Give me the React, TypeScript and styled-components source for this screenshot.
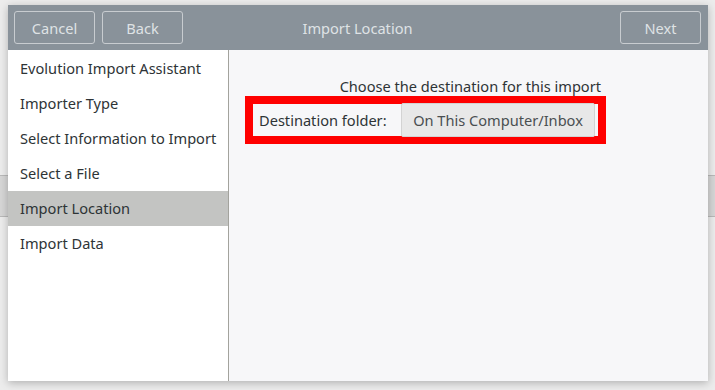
import React from "react";
import styled, { createGlobalStyle } from "styled-components";

const Global = createGlobalStyle`
  html, body { margin: 0; padding: 0; }
  body {
    width: 715px; height: 390px; overflow: hidden;
    font-family: "Noto Sans", "Open Sans", sans-serif;
    background:
      linear-gradient(to bottom, transparent 175px, #b9b9b9 175px, #b9b9b9 176px, #d6d6d6 176px, #d6d6d6 216px, #b9b9b9 216px, #b9b9b9 217px, transparent 217px),
      #ececec;
  }
`;

const Stage = styled.div`
  padding: 5px 7px 9px 8px;
`;

const Dialog = styled.div`
  width: 700px;
  height: 376px;
  display: flex;
  flex-direction: column;
  box-shadow: 0 2px 8px rgba(0, 0, 0, 0.25);
  background: #f7f7f9;
`;

const Header = styled.div`
  height: 45px;
  background: #89929a;
  display: grid;
  grid-template-columns: 1fr auto 1fr;
  align-items: center;
  padding: 0 7px 0 6px;
  flex-shrink: 0;
`;

const ButtonGroup = styled.div<{ $end?: boolean }>`
  display: flex;
  gap: 7px;
  justify-content: ${(p) => (p.$end ? "flex-end" : "flex-start")};
`;

const HeaderButton = styled.button`
  width: 81px;
  height: 33px;
  border: 1px solid #c8ccd0;
  border-radius: 3px;
  background: transparent;
  color: #dfe2e5;
  font-family: inherit;
  font-size: 14.6px;
  padding: 0;
`;

const Title = styled.div`
  text-align: center;
  color: #dfe2e5;
  font-size: 14.6px;
`;

const Body = styled.div`
  flex: 1;
  display: flex;
  min-height: 0;
`;

const Sidebar = styled.div`
  width: 220px;
  background: #ffffff;
  border-right: 1px solid #a3a39d;
  display: flex;
  flex-direction: column;
  padding-top: 1px;
`;

const Step = styled.div<{ $active?: boolean }>`
  height: 35px;
  box-sizing: border-box;
  display: flex;
  align-items: center;
  padding: 0 0 2px 12px;
  font-size: 14.6px;
  color: #2e3436;
  background: ${(p) => (p.$active ? "#c3c4c2" : "transparent")};
`;

const Content = styled.div`
  flex: 1;
  display: flex;
  flex-direction: column;
  padding: 27px 0 0 16px;
`;

const Prompt = styled.div`
  font-size: 14.6px;
  color: #2e3436;
  width: 356px;
  text-align: right;
  line-height: 18px;
  margin-bottom: 1px;
`;

const Highlight = styled.div`
  width: 336px;
  height: 32px;
  border: 8px solid #ff0000;
  display: flex;
  align-items: center;
  justify-content: space-between;
  padding: 0 3px 0 6px;
  box-sizing: content-box;
`;

const Label = styled.span`
  font-size: 14.6px;
  color: #2e3436;
`;

const FolderButton = styled.button`
  width: 194px;
  height: 34px;
  border: 1px solid #d3d3d3;
  border-radius: 2px;
  background: #e8e8e8;
  color: #4a4f51;
  font-family: inherit;
  font-size: 14.6px;
  padding: 0;
`;

const steps = [
  "Evolution Import Assistant",
  "Importer Type",
  "Select Information to Import",
  "Select a File",
  "Import Location",
  "Import Data",
];

export default function App() {
  return (
    <>
      <Global />
      <Stage>
        <Dialog>
          <Header>
            <ButtonGroup>
              <HeaderButton>Cancel</HeaderButton>
              <HeaderButton>Back</HeaderButton>
            </ButtonGroup>
            <Title>Import Location</Title>
            <ButtonGroup $end>
              <HeaderButton>Next</HeaderButton>
            </ButtonGroup>
          </Header>
          <Body>
            <Sidebar>
              {steps.map((s) => (
                <Step key={s} $active={s === "Import Location"}>
                  {s}
                </Step>
              ))}
            </Sidebar>
            <Content>
              <Prompt>Choose the destination for this import</Prompt>
              <Highlight>
                <Label>Destination folder:</Label>
                <FolderButton>On This Computer/Inbox</FolderButton>
              </Highlight>
            </Content>
          </Body>
        </Dialog>
      </Stage>
    </>
  );
}
